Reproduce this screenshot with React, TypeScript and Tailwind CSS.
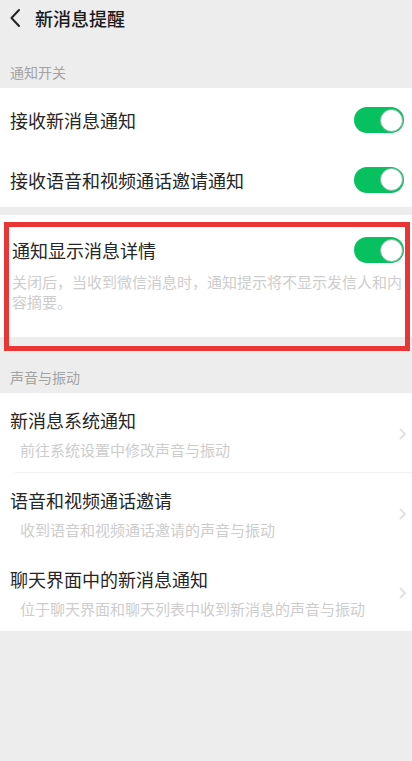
import React from 'react';

const font = "font-['Noto_Sans_CJK_SC',sans-serif]";

function Toggle() {
    return (
        <div className="w-[50px] h-[26px] rounded-full bg-[#07c160] flex items-center justify-end pr-[1.5px] shrink-0">
            <div className="w-[23px] h-[23px] rounded-full bg-white border border-[#7fb99a]" />
        </div>
    );
}

function Chevron() {
    return (
        <svg width="8" height="12" viewBox="0 0 8 12" className="shrink-0">
            <path d="M1.5 1.5 L6 6 L1.5 10.5" fill="none" stroke="#e2e2e2" strokeWidth="2" strokeLinecap="round" strokeLinejoin="round" />
        </svg>
    );
}

function SectionLabel({ children, height }: { children: React.ReactNode; height: string }) {
    return (
        <div className={`flex items-end pb-[6px] pl-[10px] ${height}`}>
            <span className="text-[14px] leading-[20px] text-[#a3a3a3]">{children}</span>
        </div>
    );
}

function LinkRow({ title, sub }: { title: string; sub: string }) {
    return (
        <div className="flex items-center pl-[10px] pr-[5px] pt-[14px] pb-[12px]">
            <div className="flex-1 min-w-0">
                <div className="text-[18px] leading-[26px] text-[#262626]">{title}</div>
                <div className="mt-[7px] pl-[10px] text-[15px] leading-[20px] text-[#cdcdcd]">{sub}</div>
            </div>
            <Chevron />
        </div>
    );
}

export default function App() {
    return (
        <div className={`relative min-h-screen bg-[#ededed] ${font}`}>
            {/* Header */}
            <div className="h-[36px] flex items-center">
                <svg width="12" height="20" viewBox="0 0 12 20" className="ml-[9px]">
                    <path d="M10 2 L2.5 10 L10 18" fill="none" stroke="#222" strokeWidth="2" strokeLinecap="round" strokeLinejoin="round" />
                </svg>
                <span className="ml-[14px] text-[18px] leading-[26px] font-medium text-[#1a1a1a]">新消息提醒</span>
            </div>

            <SectionLabel height="h-[52px]">通知开关</SectionLabel>

            {/* 通知开关 */}
            <div className="bg-white">
                <div className="h-[64px] flex items-center justify-between pl-[10px] pr-[8px]">
                    <span className="text-[18px] leading-[26px] text-[#262626]">接收新消息通知</span>
                    <Toggle />
                </div>
                <div className="h-[55px] flex items-center justify-between pl-[10px] pr-[8px]">
                    <span className="text-[18px] leading-[26px] text-[#262626]">接收语音和视频通话邀请通知</span>
                    <Toggle />
                </div>
            </div>

            <div className="h-[8px]" />

            {/* 通知显示消息详情 */}
            <div className="bg-white pt-[22px] pb-[25px] pl-[12px] pr-[8px]">
                <div className="flex items-center justify-between">
                    <span className="text-[18px] leading-[26px] text-[#262626]">通知显示消息详情</span>
                    <Toggle />
                </div>
                <div className="mt-[9px] text-[15px] leading-[20px] text-[#cdcdcd]">
                    关闭后，当收到微信消息时，通知提示将不显示发信人和内容摘要。
                </div>
            </div>

            <SectionLabel height="h-[56px]">声音与振动</SectionLabel>

            {/* 声音与振动 */}
            <div className="bg-white">
                <LinkRow title="新消息系统通知" sub="前往系统设置中修改声音与振动" />
                <div className="ml-[15px] h-px bg-[#f0f0f0]" />
                <LinkRow title="语音和视频通话邀请" sub="收到语音和视频通话邀请的声音与振动" />
                <LinkRow title="聊天界面中的新消息通知" sub="位于聊天界面和聊天列表中收到新消息的声音与振动" />
            </div>

            {/* Red highlight annotation */}
            <div className="absolute top-[222px] left-[4px] w-[406px] h-[129px] border-[5px] border-[#ea3535] pointer-events-none" />
        </div>
    );
}
